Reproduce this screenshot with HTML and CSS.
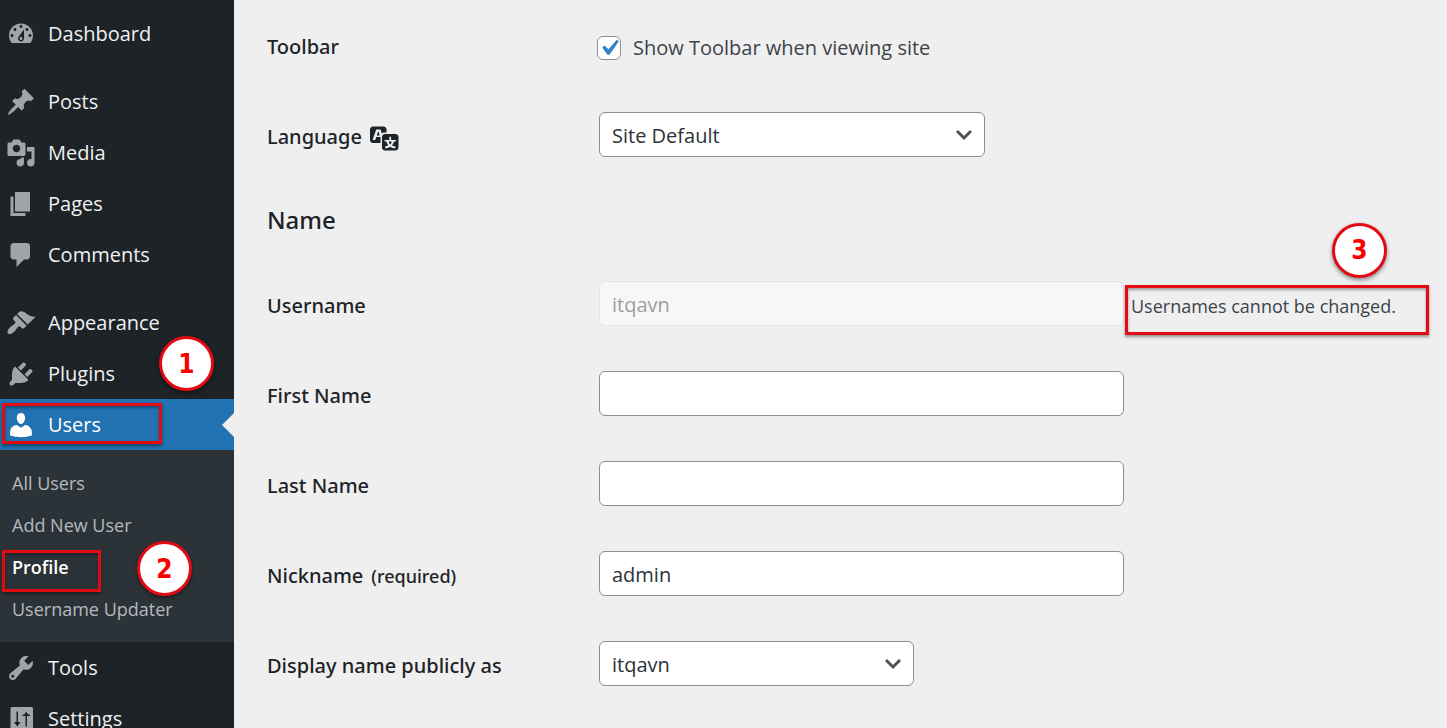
FILE: index.html
```html
<!DOCTYPE html>
<html lang="en">
<head>
<meta charset="utf-8">
<meta name="viewport" content="width=device-width, initial-scale=1">
<title>Profile</title>
<link rel="stylesheet" href="styles.css">
</head>
<body class="admin">
<nav class="sidebar" aria-label="Main menu">
  <ul class="menu">
    <li><a class="menu-link" href="#"><svg class="icon" viewBox="0 0 20 20" aria-hidden="true"><path d="M3.76 16h12.48c1.1-1.37 1.76-3.11 1.76-5 0-4.42-3.58-8-8-8s-8 3.58-8 8c0 1.89.66 3.63 1.76 5zM10 4c.55 0 1 .45 1 1s-.45 1-1 1-1-.45-1-1 .45-1 1-1zM6 6c.55 0 1 .45 1 1s-.45 1-1 1-1-.45-1-1 .45-1 1-1zm8 0c.55 0 1 .45 1 1s-.45 1-1 1-1-.45-1-1 .45-1 1-1zm-5.370 5.550L12 7v6c0 1.100-.9 2-2 2s-2-.9-2-2c0-.57.24-1.080.63-1.450zM4 10c.55 0 1 .45 1 1s-.45 1-1 1-1-.45-1-1 .45-1 1-1zm12 0c.55 0 1 .45 1 1s-.45 1-1 1-1-.45-1-1 .45-1 1-1zm-5 3c0-.55-.45-1-1-1s-1 .45-1 1 .45 1 1 1 1-.45 1-1z"/></svg>Dashboard</a></li>
    <li class="group"><a class="menu-link" href="#"><svg class="icon" viewBox="0 0 20 20" aria-hidden="true"><path d="M10.440 3.020l1.820-1.820 6.360 6.350-1.830 1.820c-1.050-.68-2.480-.57-3.410.36l-.75.75c-.92.93-1.040 2.350-.35 3.410l-1.830 1.820-2.410-2.410-2.800 2.790c-.42.42-3.380 2.710-3.800 2.290s1.860-3.390 2.280-3.810l2.790-2.790L4.100 9.360l1.830-1.820c1.050.69 2.480.57 3.400-.36l.75-.75c.93-.92 1.050-2.350.36-3.410z"/></svg>Posts</a></li>
    <li><a class="menu-link" href="#"><svg class="icon" viewBox="0 0 20 20" aria-hidden="true"><path d="M13 11V4c0-.55-.45-1-1-1h-1.670L9 1H5L3.670 3H2c-.55 0-1 .45-1 1v7c0 .55.45 1 1 1h10c.55 0 1-.45 1-1zM7 4.500c1.380 0 2.500 1.120 2.500 2.500S8.380 9.500 7 9.500 4.500 8.380 4.500 7 5.620 4.500 7 4.500zM14 6h5v10.500c0 1.380-1.120 2.500-2.500 2.500S14 17.880 14 16.500s1.120-2.500 2.500-2.500c.17 0 .34.02.5.05V9h-3V6zm-4 8.050V13h2v3.500c0 1.380-1.120 2.500-2.500 2.500S7 17.880 7 16.500 8.120 14 9.500 14c.17 0 .34.02.5.05z"/></svg>Media</a></li>
    <li><a class="menu-link" href="#"><svg class="icon" viewBox="0 0 20 20" aria-hidden="true"><path d="M6 15V2h10v13H6zm-1 1h8v2H3V5h2v11z"/></svg>Pages</a></li>
    <li><a class="menu-link" href="#"><svg class="icon" viewBox="0 0 20 20" aria-hidden="true"><path d="M5 2h9c1.100 0 2 .9 2 2v7c0 1.100-.9 2-2 2h-2l-5 5v-5H5c-1.100 0-2-.9-2-2V4c0-1.100.9-2 2-2z"/></svg>Comments</a></li>
    <li class="group"><a class="menu-link" href="#"><svg class="icon" viewBox="0 0 20 20" aria-hidden="true"><path d="M14.480 11.060L7.410 3.990l1.500-1.500c.5-.56 2.300-.47 3.510.32 1.210.8 1.430 1.280 2.910 2.100 1.180.64 2.450 1.260 4.450.85zm-.71.71L6.700 4.700 4.930 6.470c-.39.39-.39 1.020 0 1.410l1.060 1.060c.39.39.39 1.030 0 1.420-.6.6-1.430 1.110-2.210 1.690-.35.26-.7.53-1.010.84C1.430 14.230.4 16.080 1.400 17.070c.99 1 2.840-.03 4.180-1.360.31-.31.58-.66.85-1.020.57-.78 1.080-1.610 1.690-2.210.39-.39 1.020-.39 1.410 0l1.060 1.060c.39.39 1.020.39 1.410 0z"/></svg>Appearance</a></li>
    <li><a class="menu-link" href="#"><svg class="icon" viewBox="0 0 20 20" aria-hidden="true"><path d="M13.110 4.360L9.870 7.600 8 5.730l3.240-3.240c.35-.34 1.050-.2 1.560.32.52.51.66 1.210.31 1.550zm-8 1.770l.91-1.120 9.010 9.010-1.190.84c-.71.71-2.630 1.160-3.820 1.160H6.140L4.900 17.260c-.59.59-1.540.59-2.120 0-.59-.58-.59-1.530 0-2.120l1.240-1.240v-3.880c0-1.130.4-3.190 1.090-3.890zm7.260 3.970l3.240-3.240c.34-.35 1.040-.21 1.550.31.52.51.66 1.210.31 1.550l-3.240 3.250z"/></svg>Plugins</a></li>
    <li class="current">
      <a class="menu-link" href="#"><svg class="icon" viewBox="0 0 20 20" aria-hidden="true"><path d="M10 9.250c-2.270 0-2.730-3.440-2.730-3.440C7 4.020 7.820 2 9.970 2c2.160 0 2.980 2.020 2.710 3.810 0 0-.41 3.440-2.680 3.440zm0 2.570L12.720 10c2.390 0 4.520 2.330 4.520 4.530v2.490s-3.650 1.130-7.240 1.130c-3.650 0-7.240-1.130-7.240-1.130v-2.490c0-2.250 1.940-4.480 4.470-4.480z"/></svg>Users</a>
      <span class="frame frame-users"></span>
      <span class="marker marker-users">1</span>
      <ul class="submenu">
        <li><a href="#">All Users</a></li>
        <li><a href="#">Add New User</a></li>
        <li class="selected"><a href="#" aria-current="page">Profile</a><span class="frame frame-profile"></span><span class="marker marker-profile">2</span></li>
        <li><a href="#">Username Updater</a></li>
      </ul>
    </li>
    <li><a class="menu-link" href="#"><svg class="icon" viewBox="0 0 20 20" aria-hidden="true"><path d="M16.680 9.770c-1.340 1.340-3.300 1.670-4.950.99l-5.410 6.520c-.99.99-2.590.99-3.580 0s-.99-2.590 0-3.570l6.520-5.420c-.68-1.650-.35-3.610.99-4.950 1.280-1.280 3.120-1.620 4.720-1.060l-2.890 2.890 2.820 2.820 2.860-2.870c.53 1.580.18 3.390-1.080 4.650zM3.810 16.210c.4.39 1.040.39 1.430 0 .4-.4.4-1.040 0-1.430-.39-.4-1.030-.4-1.430 0-.39.39-.39 1.030 0 1.430z"/></svg>Tools</a></li>
    <li><a class="menu-link" href="#"><svg class="icon" viewBox="0 0 20 20" aria-hidden="true"><path fill-rule="evenodd" d="M4 2h13c.55 0 1 .45 1 1v14c0 .55-.45 1-1 1H4c-.55 0-1-.45-1-1V3c0-.55.45-1 1-1zM7 5v7H5.300L7.500 15l2.200-3H8V5zM13 8v7h1V8h2V7h-1.200L13.500 5l-1.300 2H11v1z"/></svg>Settings</a></li>
  </ul>
</nav>
<main class="content">
  <form class="profile">
    <div class="row">
      <span class="label">Toolbar</span>
      <label class="check"><input type="checkbox" checked>Show Toolbar when viewing site</label>
    </div>
    <div class="row">
      <label class="label" for="locale">Language <svg class="icon" viewBox="0 0 20 20" aria-hidden="true"><path d="M11 7H9.490c-.63 0-1.250.3-1.590.7L7 5H4.130l-2.390 7h1.690l.74-2H7v4H2c-1.100 0-2-.9-2-2V5c0-1.100.9-2 2-2h7c1.100 0 2 .9 2 2v2zM6.510 9H4.490l1-2.930zM10 8h7c1.100 0 2 .9 2 2v7c0 1.100-.9 2-2 2h-7c-1.100 0-2-.9-2-2v-7c0-1.100.9-2 2-2zm7.250 5v-1.080h-3.170V9.750h-1.160v2.170H9.750V13h1.280c.11.85.56 1.850 1.280 2.620-.87.36-1.890.62-2.310.62-.01.02.22.97.2 1.460.84 0 2.210-.5 3.280-1.150 1.090.65 2.480 1.150 3.340 1.150-.02-.49.2-1.440.2-1.460-.43 0-1.490-.27-2.380-.63.7-.77 1.140-1.770 1.250-2.610h1.360zm-3.810 1.930c-.5-.46-.85-1.130-1.010-1.930h2.090c-.17.8-.51 1.470-1 1.930l-.04.03s-.03-.02-.04-.03z"/></svg></label>
      <div class="cell"><select class="field language" id="locale"><option>Site Default</option></select></div>
    </div>
    <h2 class="heading">Name</h2>
    <div class="row">
      <label class="label" for="username">Username</label>
      <div class="cell">
        <input class="field" id="username" type="text" value="itqavn" disabled>
        <span class="note">Usernames cannot be changed.<span class="frame frame-note"></span><span class="marker marker-note">3</span></span>
      </div>
    </div>
    <div class="row">
      <label class="label" for="first">First Name</label>
      <div class="cell"><input class="field" id="first" type="text"></div>
    </div>
    <div class="row">
      <label class="label" for="last">Last Name</label>
      <div class="cell"><input class="field" id="last" type="text"></div>
    </div>
    <div class="row">
      <label class="label" for="nickname">Nickname <span class="required">(required)</span></label>
      <div class="cell"><input class="field" id="nickname" type="text" value="admin"></div>
    </div>
    <div class="row">
      <label class="label" for="display">Display name publicly as</label>
      <div class="cell"><select class="field display" id="display"><option>itqavn</option></select></div>
    </div>
  </form>
</main>
</body>
</html>
```
FILE: styles.css
```css
* { box-sizing: border-box; }

.admin {
  display: flex;
  height: 100vh;
  margin: 0;
  overflow: hidden;
  background: #efefef;
  color: #3c434a;
  font-family: "Open Sans", "Noto Sans", sans-serif;
  font-size: 20px;
  line-height: 30px;
}

.icon {
  flex: none;
  width: 30px;
  height: 30px;
  fill: currentColor;
}

/* Sidebar */
.sidebar {
  flex: none;
  width: 234px;
  padding-top: 8px;
  background: #1d2327;
}

.menu,
.submenu {
  margin: 0;
  padding: 0;
  list-style: none;
}

.group { margin-top: 17px; }

.menu-link {
  display: flex;
  align-items: center;
  gap: 12px;
  height: 51px;
  padding-left: 6px;
  color: #f0f0f1;
  text-decoration: none;
}

.menu-link .icon { color: #a0a5aa; }

.current { position: relative; }

.current > .menu-link {
  background: #2271b1;
  color: #fff;
}

.current > .menu-link .icon { color: #fff; }

.current > .menu-link::after {
  content: "";
  margin-left: auto;
  border: 12px solid transparent;
  border-left-width: 0;
  border-right-color: #efefef;
}

.submenu {
  padding: 12px 0;
  background: #2c3338;
  font-size: 18px;
}

.submenu li { position: relative; }

.submenu a {
  display: block;
  padding: 6px 12px;
  color: #b4b9be;
  text-decoration: none;
}

.submenu .selected a {
  color: #fff;
  font-weight: 600;
}

/* Profile form */
.content {
  flex: 1;
  min-width: 0;
  padding: 22px 18px 0 33px;
}

.row {
  display: grid;
  grid-template-columns: 332px 1fr;
  align-items: center;
  min-height: 45px;
  margin-bottom: 45px;
}

.label {
  display: flex;
  align-items: center;
  gap: 8px;
  padding-top: 4px;
  color: #1d2327;
  font-family: "Noto Sans", "Open Sans", sans-serif;
  font-weight: 500;
}

.required { font-size: 18px; }

.heading {
  margin: 48px 0 46px;
  color: #1d2327;
  font-family: "Noto Sans", "Open Sans", sans-serif;
  font-size: 24px;
  font-weight: 500;
  line-height: 30px;
}

.cell {
  display: flex;
  align-items: center;
  gap: 7px;
}

.check {
  display: flex;
  align-items: center;
  gap: 12px;
  margin-left: -2px;
  padding-top: 7px;
}

.check input {
  appearance: none;
  width: 24px;
  height: 24px;
  margin: 0;
  border: 1px solid #8c8f94;
  border-radius: 6px;
  background: #fff url("data:image/svg+xml,%3Csvg xmlns='http://www.w3.org/2000/svg' viewBox='0 0 20 20'%3E%3Cpath d='M14.83 4.89l1.340.94-5.810 8.380H9.020L5.780 9.670l1.340-1.250 2.570 2.400z' fill='%233582c4'/%3E%3C/svg%3E") center / 32px no-repeat;
}

.field {
  width: 525px;
  height: 45px;
  margin: 0;
  padding: 2px 12px 0;
  border: 1px solid #8c8f94;
  border-radius: 6px;
  background-color: #fff;
  color: #2c3338;
  font: inherit;
}

.field:disabled {
  border-color: #e3e3e4;
  background: #f7f7f7;
  color: #9c9fa2;
}

select.field {
  appearance: none;
  background-image: url("data:image/svg+xml,%3Csvg xmlns='http://www.w3.org/2000/svg' viewBox='0 0 18 12'%3E%3Cpath d='M2 2l7 7 7-7' fill='none' stroke='%23505357' stroke-width='3'/%3E%3C/svg%3E");
  background-repeat: no-repeat;
  background-position: right 11px center;
  background-size: 18px 12px;
}

.language { width: 386px; }
.display { width: 315px; }

.note {
  position: relative;
  padding-top: 4px;
  font-size: 18px;
  white-space: nowrap;
}

/* Callouts drawn over the page */
.frame {
  position: absolute;
  border: 3px solid #e30b13;
  box-shadow: 0 2px 3px rgba(0, 0, 0, .4), inset 0 2px 3px rgba(0, 0, 0, .35);
  pointer-events: none;
}

.marker {
  position: absolute;
  display: grid;
  place-items: center;
  width: 55px;
  height: 55px;
  border: 3px solid #e30b13;
  border-radius: 50%;
  background: #fff;
  box-shadow: 0 2px 4px rgba(0, 0, 0, .45);
  color: #fa0000;
  font: bold 26px/30px "DejaVu Sans Condensed", "DejaVu Sans", sans-serif;
  pointer-events: none;
}

.frame-users { top: 4px; left: 2px; width: 160px; height: 41px; }
.marker-users { top: -63px; left: 159px; }
.frame-profile { top: 4px; left: 2px; width: 99px; height: 42px; }
.marker-profile { top: -5px; left: 137px; }
.frame-note { top: -2px; left: -6px; width: 304px; height: 50px; }
.marker-note { top: -64px; left: 201px; }
```
